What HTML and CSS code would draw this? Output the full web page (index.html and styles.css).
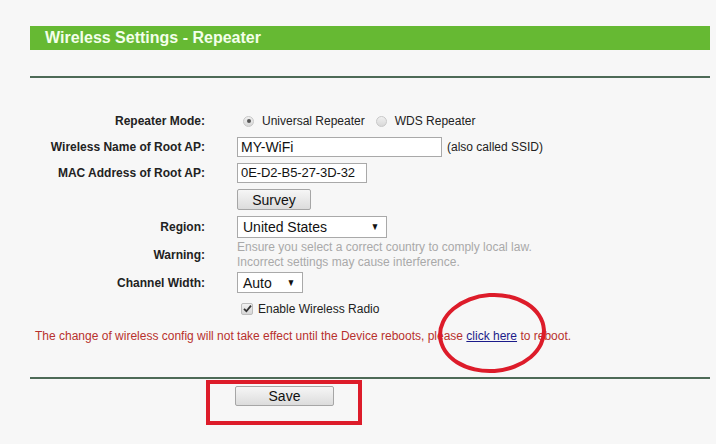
FILE: index.html
```html
<!DOCTYPE html>
<html lang="en">

<head>
  <meta charset="UTF-8" />
  <meta name="viewport" content="width=device-width, initial-scale=1.0" />
  <title>Wireless Settings - Repeater</title>
  <link rel="stylesheet" href="styles.css">
</head>

<body>

  <div class="page">
    <h1 class="title">Wireless Settings - Repeater</h1>
    <hr class="rule">

    <div class="form">
      <div class="label">Repeater Mode:</div>
      <div class="field">
        <span class="radio checked"></span><span class="opt">Universal Repeater</span>
        <span class="radio"></span><span class="opt">WDS Repeater</span>
      </div>

      <div class="label">Wireless Name of Root AP:</div>
      <div class="field">
        <span class="input wide">MY-WiFi</span>
        <span class="hint">(also called SSID)</span>
      </div>

      <div class="label">MAC Address of Root AP:</div>
      <div class="field">
        <span class="input mac">0E-D2-B5-27-3D-32</span>
      </div>

      <div class="label"></div>
      <div class="field">
        <button class="btn survey">Survey</button>
      </div>

      <div class="label">Region:</div>
      <div class="field">
        <div class="select region"><span>United States</span><span class="arrow">&#9660;</span></div>
      </div>

      <div class="label">Warning:</div>
      <div class="field warning">
        Ensure you select a correct country to comply local law.<br>
        Incorrect settings may cause interference.
      </div>

      <div class="label">Channel Width:</div>
      <div class="field">
        <div class="select channel"><span>Auto</span><span class="arrow">&#9660;</span></div>
      </div>

      <div class="label"></div>
      <div class="field">
        <span class="check">
          <svg width="9" height="9" viewBox="0 0 9 9"><path d="M1 4.8 L3.4 7.2 L8 1.6" fill="none" stroke="#333" stroke-width="1.8"/></svg>
        </span>
        <span class="opt">Enable Wireless Radio</span>
      </div>
    </div>

    <p class="notice">The change of wireless config will not take effect until the Device reboots, please <a href="#">click here</a> to reboot.</p>

    <hr class="rule">

    <div class="actions">
      <button class="btn save">Save</button>
    </div>

    <!-- hand drawn marks -->
    <div class="mark ring"></div>
    <div class="mark box"></div>
  </div>

</body>

</html>
```

FILE: styles.css
```css
body {
  margin: 0;
  background: #f7f7f7;
  font-family: "Liberation Sans", Arial, sans-serif;
  font-size: 12px;
  color: #222;
}

.page {
  position: relative;
  width: 680px;
  padding: 26px 0 0 30px;
}

.title {
  margin: 0;
  height: 24px;
  line-height: 24px;
  padding-left: 15px;
  background: #66b933;
  color: #f3ffea;
  font-size: 16px;
  font-weight: bold;
}

.rule {
  border: 0;
  height: 2px;
  margin: 26px 0 0;
  background: #4d6a57;
}

.form {
  display: grid;
  grid-template-columns: 175px 1fr;
  grid-template-rows: 26px 26px 26px 27px 27px 29px 27px 25px;
  column-gap: 32px;
  margin-top: 30px;
}

.label {
  display: flex;
  align-items: center;
  justify-content: flex-end;
  font-weight: bold;
  color: #222;
}

.field {
  display: flex;
  align-items: center;
  white-space: nowrap;
}

.opt {
  margin-right: 5px;
}

.radio {
  width: 11px;
  height: 11px;
  margin: 0 8px 0 6px;
  border: 1px solid #c8c8c8;
  border-radius: 50%;
  background: linear-gradient(#f0f0f0, #d8d8d8);
  box-sizing: border-box;
  position: relative;
}

.radio.checked::after {
  content: "";
  position: absolute;
  left: 2.5px;
  top: 2.5px;
  width: 4px;
  height: 4px;
  border-radius: 50%;
  background: #555;
}

.input {
  box-sizing: border-box;
  height: 20px;
  line-height: 18px;
  padding: 0 3px;
  border: 1px solid #a9a9a9;
  background: #fff;
  font-size: 14px;
  color: #111;
  overflow: hidden;
}

.input.wide {
  width: 205px;
}

.input.mac {
  width: 130px;
  font-size: 13px;
  letter-spacing: -0.1px;
}

.hint {
  margin-left: 5px;
}

.btn {
  box-sizing: border-box;
  font-family: inherit;
  font-size: 14px;
  color: #111;
  border: 1px solid #a6a6a6;
  border-radius: 2px;
  background: linear-gradient(#f6f6f6, #dcdcdc);
  padding: 0;
}

.survey {
  width: 74px;
  height: 21px;
}

.select {
  box-sizing: border-box;
  height: 22px;
  display: flex;
  align-items: center;
  justify-content: space-between;
  padding: 0 6px 0 5px;
  border: 1px solid #a9a9a9;
  background: #fff;
  font-size: 14px;
  color: #111;
}

.select .arrow {
  font-size: 10px;
  transform: scaleX(0.85);
}

.region {
  width: 150px;
}

.channel {
  width: 66px;
  height: 21px;
}

.warning {
  display: block;
  padding-top: 1px;
  line-height: 15px;
  color: #a9a9a9;
  align-self: center;
}

.check {
  box-sizing: border-box;
  width: 12px;
  height: 12px;
  margin: 0 5px 0 4px;
  border: 1px solid #bdbdbd;
  border-radius: 2px;
  background: linear-gradient(#f2f2f2, #d6d6d6);
  display: flex;
  align-items: center;
  justify-content: center;
}

.notice {
  margin: 8px 0 0 5px;
  line-height: 15px;
  color: #b7312d;
}

.notice a {
  color: #1b1b8a;
}

.notice + .rule {
  margin-top: 33px;
}

.actions {
  padding: 7px 0 20px 205px;
}

.save {
  width: 99px;
  height: 20px;
}

/* red marker annotations */
.mark {
  position: absolute;
  box-sizing: border-box;
  pointer-events: none;
}

.ring {
  left: 438px;
  top: 293px;
  width: 108px;
  height: 80px;
  border: 4px solid #dd1c2a;
  border-radius: 50%;
  transform: rotate(-4deg);
}

.box {
  left: 206px;
  top: 380px;
  width: 156px;
  height: 45px;
  border: 4px solid #dd1c2a;
}
```
